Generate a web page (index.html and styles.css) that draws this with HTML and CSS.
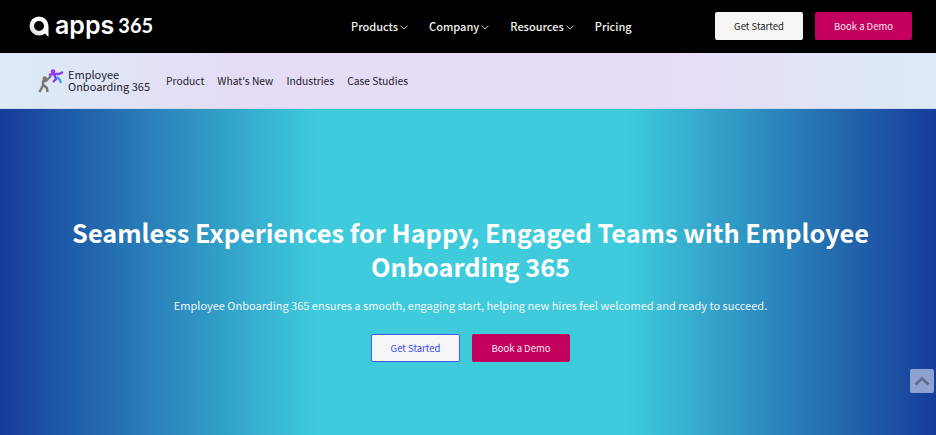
FILE: index.html
```html
<!DOCTYPE html>
<html lang="en">
<head>
  <meta charset="UTF-8">
  <meta name="viewport" content="width=device-width, initial-scale=1.0">
  <title>Employee Onboarding 365</title>
  <link rel="stylesheet" href="styles.css">
</head>
<body>
  <header class="topbar">
    <a class="logo" href="#">
      <svg class="logo-mark" width="20" height="21" viewBox="0 0 20 21">
        <defs>
          <linearGradient id="markfill" x1="0" y1="1" x2="1" y2="0">
            <stop offset="0" stop-color="#c8c8c8"/>
            <stop offset="0.5" stop-color="#fff"/>
          </linearGradient>
        </defs>
        <path d="M10 0.5a9.5 9.5 0 1 0 0 19c2.5 0 4.5-0.8 6-2l3.5 3.5V10A9.5 9.5 0 0 0 10 0.5zM10 5a5 5 0 1 1 0 10a5 5 0 0 1 0-10z" fill="url(#markfill)" fill-rule="evenodd"/>
      </svg>
      <span class="logo-name">apps</span>
      <span class="logo-num">365</span>
    </a>
    <nav class="main-nav">
      <a href="#">Products<svg class="caret" width="8" height="5" viewBox="0 0 8 5"><path d="M0.5 0.7L4 4L7.5 0.7" fill="none" stroke="#ddd" stroke-width="0.9"/></svg></a>
      <a href="#">Company<svg class="caret" width="8" height="5" viewBox="0 0 8 5"><path d="M0.5 0.7L4 4L7.5 0.7" fill="none" stroke="#ddd" stroke-width="0.9"/></svg></a>
      <a href="#">Resources<svg class="caret" width="8" height="5" viewBox="0 0 8 5"><path d="M0.5 0.7L4 4L7.5 0.7" fill="none" stroke="#ddd" stroke-width="0.9"/></svg></a>
      <a href="#">Pricing</a>
    </nav>
    <div class="top-buttons">
      <a class="btn btn-light" href="#">Get Started</a>
      <a class="btn btn-pink" href="#">Book a Demo</a>
    </div>
  </header>

  <div class="subbar">
    <a class="product-logo" href="#">
      <svg width="28" height="24" viewBox="0 0 28 24">
        <circle cx="6.7" cy="9.5" r="2.2" fill="#777"/>
        <path d="M1.5 23L5 16.5L5 12.5L8.5 11.5L13 7" fill="none" stroke="#777" stroke-width="2.4"/>
        <path d="M5.5 16L9 19L9.5 23" fill="none" stroke="#777" stroke-width="2.4"/>
        <circle cx="15" cy="2.5" r="2.2" fill="#a233ee"/>
        <path d="M11 6L15 5L21 5L25 3" fill="none" stroke="#8a3cf0" stroke-width="2.4"/>
        <path d="M16 5L18 10L15 13" fill="none" stroke="#7d3ff0" stroke-width="2.4"/>
        <path d="M19 8L22 11L23 14" fill="none" stroke="#2f9cf0" stroke-width="2.2"/>
      </svg>
      <span class="product-name">Employee<br>Onboarding 365</span>
    </a>
    <nav class="sub-nav">
      <a href="#">Product</a>
      <a href="#">What's New</a>
      <a href="#">Industries</a>
      <a href="#">Case Studies</a>
    </nav>
  </div>

  <section class="hero">
    <h1>Seamless Experiences for Happy, Engaged Teams with Employee Onboarding 365</h1>
    <p>Employee Onboarding 365 ensures a smooth, engaging start, helping new hires feel welcomed and ready to succeed.</p>
    <div class="hero-buttons">
      <a class="btn btn-outline" href="#">Get Started</a>
      <a class="btn btn-pink btn-hero" href="#">Book a Demo</a>
    </div>
    <a class="to-top" href="#">
      <svg width="16" height="10" viewBox="0 0 16 10"><path d="M1.5 8.5L8 2.5L14.5 8.5" fill="none" stroke="#5b6c8c" stroke-width="2.6"/></svg>
    </a>
  </section>
</body>
</html>
```

FILE: styles.css
```css
* {
  margin: 0;
  padding: 0;
  box-sizing: border-box;
}

body {
  font-family: "Noto Sans CJK KR", "Noto Sans", sans-serif;
  height: 435px;
  overflow: hidden;
  background-color: #fff;
}

a {
  text-decoration: none;
  color: inherit;
}

.topbar {
  display: flex;
  align-items: center;
  height: 53px;
  padding: 0 24px 1px 29px;
  background-color: #000;
}

.logo {
  display: flex;
  align-items: center;
  color: #fff;
  width: 322px;
}

.logo-mark {
  margin-right: 6px;
}

.logo-name {
  font-family: "Inter", sans-serif;
  font-size: 25px;
  line-height: 26px;
  font-weight: 600;
  margin-right: 4px;
  margin-top: -3px;
}

.logo-num {
  font-family: "Lato", sans-serif;
  font-size: 20px;
  line-height: 26px;
  font-weight: 700;
  margin-top: -2px;
}

.main-nav {
  display: flex;
  gap: 21px;
  font-size: 11px;
  font-weight: 500;
  color: #f2f2f2;
}

.caret {
  margin-left: 2px;
  vertical-align: 1px;
}

.top-buttons {
  display: flex;
  gap: 12px;
  margin-left: auto;
}

.btn {
  display: flex;
  align-items: center;
  justify-content: center;
  font-size: 9.5px;
  border-radius: 2px;
}

.top-buttons .btn {
  height: 28px;
}

.btn-light {
  width: 88px;
  background-color: #f5f5f5;
  color: #222;
}

.btn-pink {
  width: 97px;
  background-color: #c4005f;
  color: #f7e6ef;
}

.subbar {
  display: flex;
  align-items: center;
  height: 56px;
  padding-left: 38px;
  background: linear-gradient(90deg, #dcebf7 0%, #e5dcf6 25%, #e6dcf6 72%, #dcebf7 100%);
  border-bottom: 1px solid #cdd6e6;
}

.product-logo {
  display: flex;
  align-items: center;
  gap: 2px;
  font-size: 11px;
  line-height: 12px;
  color: #22222e;
}

.product-name {
  margin-bottom: 2px;
}

.sub-nav {
  display: flex;
  gap: 13px;
  margin-left: 16px;
  font-size: 10.3px;
  color: #22222e;
}

.hero {
  position: relative;
  height: 326px;
  padding: 106px 0 0 5px;
  text-align: center;
  color: #fff;
  background: linear-gradient(90deg, #163c9a 0%, #3fcbdc 34%, #3fcbdc 67%, #163c9a 100%);
}

.hero h1 {
  width: 830px;
  margin: 0 auto;
  font-size: 25.3px;
  line-height: 34px;
  font-weight: 700;
}

.hero p {
  margin-top: 13px;
  font-size: 11px;
  line-height: 18px;
  color: #f0f6fa;
}

.hero-buttons {
  display: flex;
  justify-content: center;
  gap: 12px;
  margin-top: 20px;
}

.hero-buttons .btn {
  height: 28px;
}

.btn-outline {
  width: 89px;
  background-color: #f5f5f7;
  border: 1px solid #4a5cf0;
  color: #3a48e8;
}

.btn-hero {
  width: 98px;
}

.to-top {
  position: absolute;
  right: 2px;
  top: 260px;
  display: flex;
  align-items: center;
  justify-content: center;
  width: 24px;
  height: 24px;
  border-radius: 2px;
  background-color: #8da2cf;
}
```
